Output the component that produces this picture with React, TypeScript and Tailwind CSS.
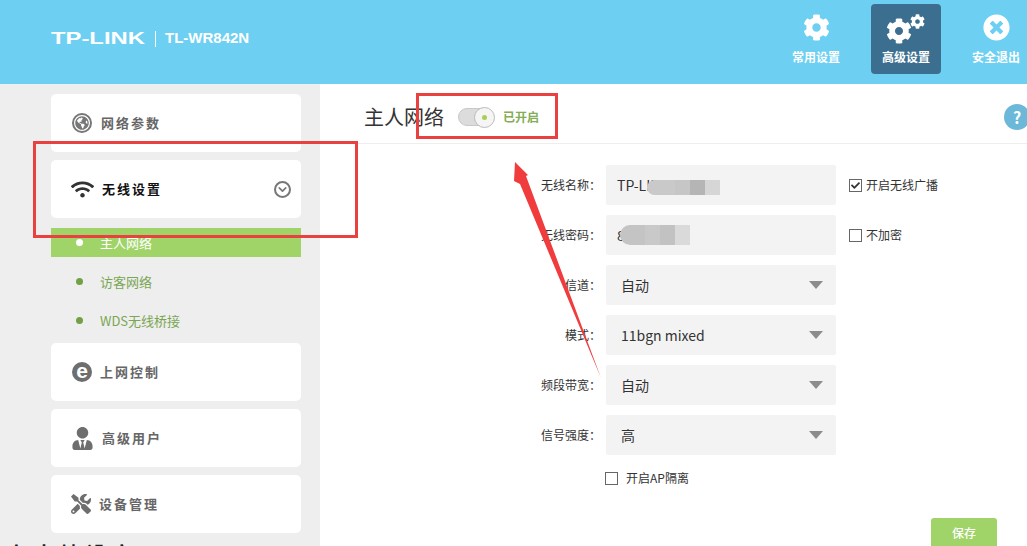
import React from "react";
import { FaCog, FaTimesCircle, FaGlobeAmericas, FaWifi, FaUserTie, FaTools, FaCheck } from "react-icons/fa";
import { ChevronDown } from "lucide-react";

const font = { fontFamily: '"Noto Sans CJK SC", "Liberation Sans", sans-serif' };

function NavItem({ label, active, children }: { label: string; active?: boolean; children: React.ReactNode }) {
  return (
    <div className={"w-[70px] h-[70px] rounded flex flex-col items-center " + (active ? "bg-[#3c6f8f]" : "")}>
      <div className="h-[40px] mt-[3px] flex items-center justify-center relative w-full">{children}</div>
      <span className="text-[12px] leading-[18px] font-bold text-white whitespace-nowrap mt-[1px]">{label}</span>
    </div>
  );
}

function MenuCard({ icon, label, labelClass, active, chevron }: { icon: React.ReactNode; label: string; labelClass: string; active?: boolean; chevron?: boolean }) {
  return (
    <div className="h-[58px] w-[250px] bg-white rounded-[5px] flex items-center pl-[19px] pr-[10px]">
      <div className="w-[24px] h-[24px] flex items-center justify-center shrink-0">{icon}</div>
      <span className={"text-[13px] font-bold tracking-[2px] " + (active ? "text-[#111] " : "text-[#666] ") + labelClass}>{label}</span>
      {chevron && (
        <div className="ml-auto w-[17px] h-[17px] rounded-full border-2 border-[#777] flex items-center justify-center">
          <ChevronDown size={13} strokeWidth={3} className="text-[#777] mt-[1px]" />
        </div>
      )}
    </div>
  );
}

function SubItem({ label, active }: { label: string; active?: boolean }) {
  return (
    <div className={"h-[29px] w-[250px] flex items-center pl-[25px] text-[13px] " + (active ? "bg-[#a0d468] text-white" : "text-[#7aa653]")}>
      <span className={"w-[7px] h-[7px] rounded-full mr-[17px] " + (active ? "bg-white" : "bg-[#72a044]")} />
      {label}
    </div>
  );
}

function Field({ label, children }: { label: string; children: React.ReactNode }) {
  return (
    <div className="flex items-center h-[40px]">
      <div className="w-[281px] text-right text-[12px] text-[#333] whitespace-nowrap">{label}</div>
      <div className="w-[5px]" />
      {children}
    </div>
  );
}

function Select({ value }: { value: string }) {
  return (
    <div className="w-[230px] h-[40px] bg-[#f3f3f3] rounded-[2px] flex items-center pl-[15px] pr-[13px] text-[14px] text-[#333]">
      {value}
      <span className="ml-auto w-0 h-0 border-l-[7px] border-r-[7px] border-t-[8px] border-l-transparent border-r-transparent border-t-[#8c8c8c]" />
    </div>
  );
}

function Check({ checked, label, gap }: { checked?: boolean; label: string; gap: string }) {
  return (
    <div className="flex items-center text-[12px] text-[#333] whitespace-nowrap">
      <span className={"w-[13px] h-[13px] border border-[#666] flex items-center justify-center bg-white " + gap}>
        {checked && <FaCheck size={9} className="text-[#333]" />}
      </span>
      {label}
    </div>
  );
}

export default function App() {
  return (
    <div className="relative w-[1027px] h-[546px] overflow-hidden bg-white" style={font}>
      <header className="h-[84px] bg-[#6dcff2] flex items-start justify-between pl-[51px] mr-[-4px] pt-[4px]">
        <div className="flex items-center h-[69px] text-white">
          <span className="w-[95px] text-[17px] font-bold origin-left scale-x-[1.4] whitespace-nowrap" style={{ fontFamily: '"Liberation Sans", sans-serif' }}>TP-LINK</span>
          <span className="w-px h-[16px] bg-white mx-[9px]" />
          <span className="text-[15px] font-bold whitespace-nowrap" style={{ fontFamily: '"Liberation Sans", sans-serif' }}>TL-WR842N</span>
        </div>
        <nav className="flex gap-[20px]">
          <NavItem label="常用设置"><FaCog size={27} className="text-white" /></NavItem>
          <NavItem label="高级设置" active>
            <FaCog size={26} className="text-white absolute left-[15px] top-[11px]" />
            <FaCog size={15} className="text-white absolute left-[39px] top-[7px]" />
          </NavItem>
          <NavItem label="安全退出"><FaTimesCircle size={27} className="text-white" /></NavItem>
        </nav>
      </header>

      <div className="flex h-[462px]">
        <aside className="w-[320px] shrink-0 bg-[#eeeeee] pl-[51px] pt-[10px] flex flex-col">
          <MenuCard icon={<span className="w-[20px] h-[20px] rounded-full border-2 border-[#777] flex items-center justify-center"><FaGlobeAmericas size={14} className="text-[#777]" /></span>} label="网络参数" labelClass="ml-[7px]" />
          <div className="mt-[8px]">
            <MenuCard icon={<FaWifi size={23} className="text-[#333]" />} label="无线设置" labelClass="ml-[8px]" active chevron />
          </div>
          <div className="mt-[10px] flex flex-col gap-[10px]">
            <SubItem label="主人网络" active />
            <SubItem label="访客网络" />
            <SubItem label="WDS无线桥接" />
          </div>
          <div className="mt-[8px] flex flex-col gap-[8px]">
            <MenuCard icon={<span className="w-[20px] h-[20px] rounded-full bg-[#6e6e6e] flex items-center justify-center text-white text-[21px] font-bold leading-none pb-[3px]" style={{ fontFamily: '"Liberation Sans", sans-serif' }}>e</span>} label="上网控制" labelClass="ml-[6px]" />
            <MenuCard icon={<FaUserTie size={23} className="text-[#6e6e6e]" />} label="高级用户" labelClass="ml-[8px]" />
            <MenuCard icon={<FaTools size={20} className="text-[#6e6e6e] -ml-[2px]" />} label="设备管理" labelClass="ml-[5px]" />
          </div>
        </aside>

        <main className="flex-1 min-w-0 relative">
          <div className="h-[60px] border-b border-[#eeeeee] flex items-center pl-[44px] pt-[7px]">
            <h1 className="text-[20px] font-normal text-[#333]">主人网络</h1>
            <div className="relative w-[38px] h-[20px] ml-[14px]">
              <span className="absolute left-0 top-[1px] w-[32px] h-[18px] rounded-full bg-[#dcdcdc] border border-[#c8c8c8]" />
              <span className="absolute left-[16px] top-0 w-[21px] h-[21px] rounded-full bg-[#f5f5f5] border border-[#bbbbbb] flex items-center justify-center">
                <span className="w-[5px] h-[5px] rounded-full bg-[#a9cf53]" />
              </span>
            </div>
            <span className="text-[12px] font-bold text-[#84ad55] ml-[7px]">已开启</span>
          </div>

          <div className="flex flex-col gap-[10px] pt-[21px]">
            <Field label="无线名称：">
              <div className="relative w-[230px] h-[40px] bg-[#f3f3f3] rounded-[2px] flex items-center pl-[11px] text-[14px] text-[#333]">
                TP-LINK
                <div className="absolute left-[41px] top-[15px] h-[15px] flex">
                  <span className="w-[28px] bg-[#c9c9c9] rounded-l-full" />
                  <span className="w-[15px] bg-[#c6c6c6]" />
                  <span className="w-[15px] bg-[#b5b5b5]" />
                  <span className="w-[15px] bg-[#d6d6d6]" />
                </div>
              </div>
              <div className="ml-[13px]"><Check checked label="开启无线广播" gap="mr-[4px]" /></div>
            </Field>
            <Field label="无线密码：">
              <div className="relative w-[230px] h-[40px] bg-[#f3f3f3] rounded-[2px] flex items-center pl-[11px] text-[14px] text-[#333]">
                8
                <div className="absolute left-[14px] top-[10px] h-[20px] flex">
                  <span className="w-[25px] bg-[#c4c4c4] rounded-l-full" />
                  <span className="w-[15px] bg-[#c9c9c9]" />
                  <span className="w-[15px] bg-[#c2c2c2]" />
                  <span className="w-[15px] bg-[#dadada]" />
                </div>
              </div>
              <div className="ml-[13px]"><Check label="不加密" gap="mr-[4px]" /></div>
            </Field>
            <Field label="信道："><Select value="自动" /></Field>
            <Field label="模式："><Select value="11bgn mixed" /></Field>
            <Field label="频段带宽："><Select value="自动" /></Field>
            <Field label="信号强度："><Select value="高" /></Field>
          </div>
          <div className="pl-[285px] mt-[14px]"><Check label="开启AP隔离" gap="mr-[8px]" /></div>

          <button className="absolute left-[611px] top-[434px] w-[66px] h-[30px] rounded-[3px] bg-[#a0d468] text-white text-[12px] font-medium">保存</button>
        </main>
      </div>

      {/* help bubble, clipped by the window edge */}
      <div className="absolute left-[1004px] top-[104px] w-[26px] h-[26px] rounded-full bg-[#6cb8d9] text-white text-[16px] font-bold flex items-center justify-center">?</div>

      {/* clipped caption below the screenshot */}
      <div className="absolute left-[8px] top-[540px] text-[20px] leading-[28px] font-bold text-[#222] tracking-[6px] whitespace-nowrap">在本地设定</div>

      {/* annotations drawn on top of the screenshot */}
      <div className="absolute left-[33px] top-[141px] w-[325px] h-[97px] border-[3px] border-[#e94040]" />
      <div className="absolute left-[416px] top-[93px] w-[142px] h-[46px] border-[3px] border-[#e94040]" />
      <svg className="absolute left-0 top-0 pointer-events-none" width="1027" height="546">
        <polygon points="515,162 528,175 526,176 601,378 520,184 514,181" fill="#f03c3c" />
      </svg>
    </div>
  );
}
